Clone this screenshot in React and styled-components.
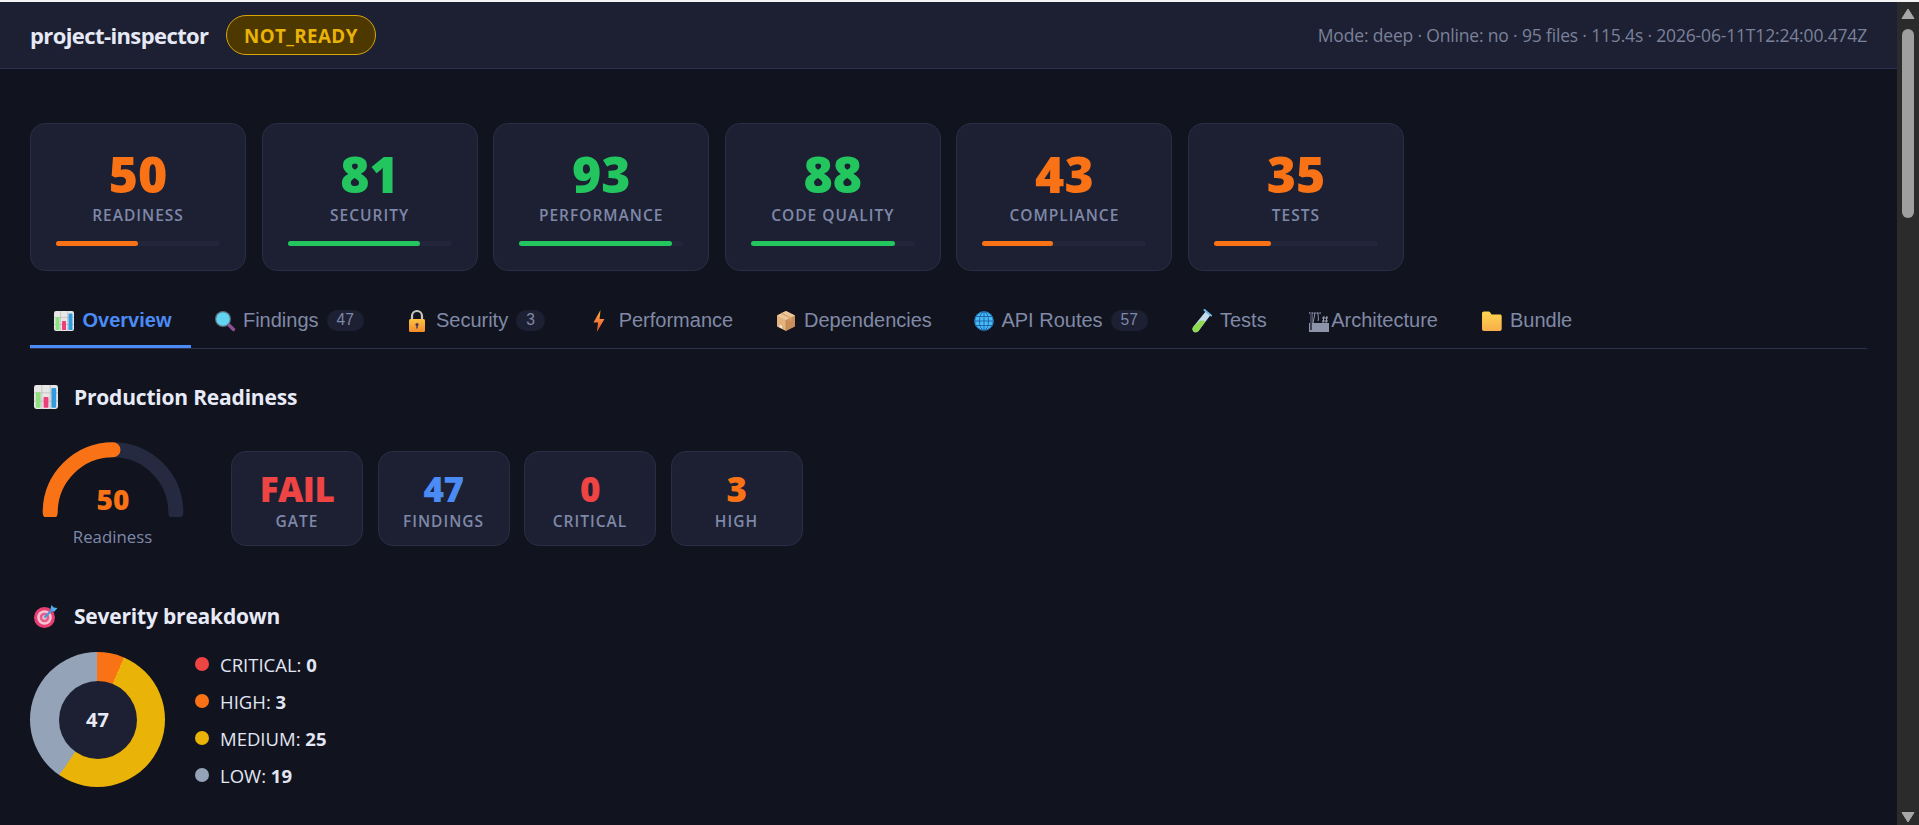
import styled, { createGlobalStyle } from "styled-components";

const ORANGE = "#f97316";
const GREEN = "#22c55e";
const RED = "#ef4444";
const BLUE = "#4b8bf5";
const YELLOW = "#eab308";
const GREY = "#94a3b8";

const GlobalStyle = createGlobalStyle`
    html, body {
        margin: 0;
        height: 825px;
        overflow: hidden;
        background: #11131f;
        font-family: "Open Sans", "Liberation Sans", sans-serif;
    }
`;

const Page = styled.div`
    display: flex;
    height: 823px;
    border-top: 2px solid #f4f4f4;
`;

const Content = styled.div`
    flex: 1;
    min-width: 0;
    background: #11131f;
`;

const Scrollbar = styled.div`
    width: 22px;
    background: #2b2b2b;
    display: flex;
    flex-direction: column;
    align-items: center;
    justify-content: space-between;
    padding: 6px 0 2px;
    box-sizing: border-box;
`;

const ScrollThumb = styled.div`
    width: 12px;
    height: 189px;
    border-radius: 6px;
    background: #9f9f9f;
    margin-top: 9px;
`;

const ScrollSpacer = styled.div`
    flex: 1;
`;

const Header = styled.header`
    height: 66px;
    padding: 0 30px;
    display: flex;
    align-items: center;
    justify-content: space-between;
    background: #1c2032;
    border-bottom: 1px solid #2c3150;
`;

const HeaderLeft = styled.div`
    display: flex;
    align-items: center;
    gap: 17.5px;
`;

const Title = styled.div`
    font-size: 22px;
    font-weight: 700;
    letter-spacing: -0.6px;
    color: #e6e9f5;
`;

const Badge = styled.span`
    display: inline-flex;
    align-items: center;
    height: 40px;
    box-sizing: border-box;
    padding: 0 17px;
    border-radius: 20px;
    border: 1px solid #d9a507;
    background: #4d3800;
    color: ${YELLOW};
    font-size: 18.75px;
    font-weight: 700;
    letter-spacing: 0.4px;
`;

const Meta = styled.div`
    font-size: 17.5px;
    letter-spacing: -0.17px;
    color: #7b819b;
`;

const Main = styled.main`
    padding: 54px 30px 0;
`;

const ScoreRow = styled.div`
    display: flex;
    gap: 15.6px;
`;

const ScoreCard = styled.div`
    width: 216px;
    height: 148px;
    box-sizing: border-box;
    padding: 25px 25px 0;
    background: #1c2032;
    border: 1px solid #2a2e45;
    border-radius: 15px;
    display: flex;
    flex-direction: column;
    align-items: center;
`;

const ScoreValue = styled.div`
    font-size: 50px;
    line-height: 50px;
    font-weight: 800;
    color: ${p => p.$color};
`;

const CardLabel = styled.div`
    font-size: 15.5px;
    line-height: 20px;
    letter-spacing: 1px;
    font-weight: 600;
    text-transform: uppercase;
    color: #7f88a8;
`;

const ScoreLabel = styled(CardLabel)`
    margin-top: 6px;
`;

const Track = styled.div`
    align-self: stretch;
    height: 5px;
    margin-top: 16px;
    border-radius: 3px;
    background: #23263a;
`;

const Fill = styled.div`
    height: 100%;
    border-radius: 3px;
    background: ${p => p.$color};
`;

const Tabs = styled.nav`
    display: flex;
    margin-top: 25px;
    border-bottom: 1px solid #2c3150;
`;

const Tab = styled.div`
    display: flex;
    align-items: center;
    height: 52px;
    box-sizing: border-box;
    padding: 0 20px;
    border-bottom: 3px solid ${p => (p.$active ? BLUE : "transparent")};
    font-family: "Liberation Sans", Arial, sans-serif;
    font-size: 20px;
    font-weight: ${p => (p.$active ? 700 : 400)};
    color: ${p => (p.$active ? BLUE : "#808aa6")};
`;

const TabIcon = styled.span`
    width: ${p => p.$width}px;
    margin-right: ${p => (p.$tight ? "0" : "5px")};
    display: flex;
    justify-content: center;
`;

const TabCount = styled.span`
    margin-left: 8px;
    height: 21px;
    padding: 0 10px;
    box-sizing: border-box;
    border-radius: 11px;
    background: #1c2032;
    font-size: 15.6px;
    line-height: 20px;
    text-align: center;
    font-weight: 400;
    color: #7f88a8;
`;

const SectionHeading = styled.h2`
    margin: ${p => p.$top}px 0 0;
    height: 30px;
    display: flex;
    align-items: center;
    gap: 12px;
    font-size: 21px;
    font-weight: 700;
    letter-spacing: -0.2px;
    color: #e8ebf7;
`;

const HeadingIcon = styled.span`
    width: 32px;
    display: flex;
    justify-content: center;
`;

const ReadinessRow = styled.div`
    display: flex;
    align-items: flex-start;
    gap: 36px;
    margin-top: 25px;
`;

const Gauge = styled.div`
    width: 165px;
    display: flex;
    flex-direction: column;
    align-items: center;
`;

const GaugeLabel = styled.div`
    font-size: 16.8px;
    line-height: 22px;
    margin-top: 9px;
    color: #7f88a8;
`;

const StatRow = styled.div`
    display: flex;
    gap: 14.5px;
    margin-top: 14px;
`;

const StatCard = styled.div`
    width: 132px;
    height: 95px;
    box-sizing: border-box;
    padding-top: 19px;
    background: #1c2032;
    border: 1px solid #2a2e45;
    border-radius: 15px;
    display: flex;
    flex-direction: column;
    align-items: center;
`;

const StatValue = styled.div`
    font-size: 35px;
    line-height: 36px;
    font-weight: 800;
    letter-spacing: -0.6px;
    color: ${p => p.$color};
`;

const StatLabel = styled(CardLabel)`
    margin-top: 4px;
`;

const SeverityRow = styled.div`
    display: flex;
    align-items: center;
    gap: 30px;
    margin-top: 21px;
`;

const Donut = styled.div`
    width: 135px;
    height: 135px;
    border-radius: 50%;
    background: conic-gradient(
        ${ORANGE} 0 23deg,
        ${YELLOW} 23deg 214.5deg,
        ${GREY} 214.5deg 360deg
    );
    display: flex;
    align-items: center;
    justify-content: center;
`;

const DonutHole = styled.div`
    width: 78px;
    height: 78px;
    border-radius: 50%;
    background: #1c2032;
    display: flex;
    align-items: center;
    justify-content: center;
    font-size: 20px;
    font-weight: 700;
    color: #e8ebf7;
`;

const Legend = styled.ul`
    list-style: none;
    margin: 0;
    padding: 0;
    display: flex;
    flex-direction: column;
    gap: 15px;
`;

const LegendItem = styled.li`
    display: flex;
    align-items: center;
    height: 22px;
    gap: 11px;
    font-size: 18.5px;
    color: #e2e6f2;

    strong {
        font-weight: 700;
    }
`;

const Dot = styled.span`
    width: 14px;
    height: 14px;
    border-radius: 50%;
    background: ${p => p.$color};
`;

const ChartEmoji = ({ size = 20 }) => (
    <svg width={size} height={size} viewBox="0 0 20 20">
        <rect width="20" height="20" rx="2" fill="#e9e6e6" />
        <path d="M6.5 0v20M13.5 0v20M0 6.5h20M0 13.5h20" stroke="#b9b6b8" strokeWidth="0.6" />
        <rect x="1.5" y="6" width="4" height="13" rx="0.6" fill="#8fe07f" />
        <rect x="8" y="10" width="4" height="9" rx="0.6" fill="#ec3f7c" />
        <rect x="14.5" y="2.5" width="4" height="16.5" rx="0.6" fill="#2f9be0" />
    </svg>
);

const SearchEmoji = () => (
    <svg width="22" height="22" viewBox="0 0 22 22">
        <path d="M13.5 13.5l6 6" stroke="#8e4f93" strokeWidth="3.4" strokeLinecap="round" />
        <circle cx="9" cy="9" r="8" fill="#5a6f80" />
        <circle cx="9" cy="9" r="6.8" fill="#63d3f2" />
    </svg>
);

const LockEmoji = () => (
    <svg width="20" height="24" viewBox="0 0 20 24">
        <defs>
            <linearGradient id="lockBody" x1="0" y1="0" x2="0" y2="1">
                <stop offset="0" stopColor="#fcc33f" />
                <stop offset="1" stopColor="#f58b2c" />
            </linearGradient>
        </defs>
        <path d="M5 11V7a5 5 0 0 1 10 0v4" fill="none" stroke="#c9c3bd" strokeWidth="2.2" />
        <rect x="2" y="10" width="16" height="13" rx="1.5" fill="url(#lockBody)" />
        <circle cx="10" cy="15.5" r="1.6" fill="#4a3560" />
        <rect x="9.3" y="15.5" width="1.4" height="4" fill="#4a3560" />
    </svg>
);

const BoltEmoji = () => (
    <svg width="14" height="24" viewBox="0 0 14 24">
        <defs>
            <linearGradient id="boltFill" x1="0" y1="0" x2="0" y2="1">
                <stop offset="0" stopColor="#fdb13c" />
                <stop offset="1" stopColor="#ec4c35" />
            </linearGradient>
        </defs>
        <path d="M8.5 1L1.5 13.5h4.6L4.8 23l7.7-13H7.6z" fill="url(#boltFill)" />
    </svg>
);

const PackageEmoji = () => (
    <svg width="20" height="22" viewBox="0 0 20 22">
        <path d="M10 1l9 4.5v11L10 21z" fill="#c98f5b" />
        <path d="M10 1L1 5.500v11L10 21z" fill="#e3b27f" />
        <path d="M1 5.500L10 10l9-4.500L10 1z" fill="#efc899" />
        <path d="M10 10v11" stroke="#b77f4e" strokeWidth="0.6" />
        <path d="M5.500 3.300l9 4.500v3" fill="none" stroke="#d9a877" strokeWidth="1.6" />
        <path d="M3.500 14.500l2.500 1.200v2.800l-2.500-1.200z" fill="#f1e8df" />
    </svg>
);

const GlobeEmoji = () => (
    <svg width="20" height="20" viewBox="0 0 20 20">
        <circle cx="10" cy="10" r="9.700" fill="#45bdf2" />
        <g fill="none" stroke="#1d5fa8" strokeWidth="0.9">
            <circle cx="10" cy="10" r="9.300" />
            <ellipse cx="10" cy="10" rx="4.500" ry="9.300" />
            <path d="M10 .7v18.600M.7 10h18.600M2 5.500h16M2 14.500h16" />
        </g>
    </svg>
);

const TubeEmoji = () => (
    <svg width="21" height="24" viewBox="0 0 21 24">
        <path d="M15 2l4.500 4L7.500 22c-1.500 1.600-3.600 1.700-5 .4-1.400-1.300-1.300-3.300 0-4.800z" fill="#c3dcea" />
        <path d="M9.500 11.500l5 .5-7 10c-1.500 1.600-3.600 1.700-5 .4-1.400-1.300-1.300-3.300 0-4.800z" fill="#8edb4e" />
        <path d="M13.500 1l6.500 5.500" stroke="#6fb8e6" strokeWidth="2" strokeLinecap="round" />
    </svg>
);

const CraneEmoji = () => (
    <svg width="20" height="22" viewBox="0 0 20 22">
        <rect y="13" width="20" height="9" fill="#8d93a8" />
        <path d="M0 3h12" stroke="#6c7188" strokeWidth="2.200" strokeDasharray="1 .6" />
        <path d="M3 3v10M6 3l-2 10M9 3c0 4 1 5 0 8" fill="none" stroke="#9097ad" strokeWidth="1" />
        <path d="M13 8h6M13 11h6M15 6l-1 7M18 6l-1 7" fill="none" stroke="#aab0c4" strokeWidth="0.9" />
        <rect x="1" y="3" width="2" height="17" fill="#3d4052" />
    </svg>
);

const FolderEmoji = () => (
    <svg width="21" height="22" viewBox="0 0 21 22">
        <defs>
            <linearGradient id="folderFill" x1="0" y1="0" x2="0" y2="1">
                <stop offset="0" stopColor="#fed64f" />
                <stop offset="1" stopColor="#f7ae4b" />
            </linearGradient>
        </defs>
        <path d="M1 3.500C1 2.300 1.800 1.500 3 1.500h4.500c.8 0 1.300.3 1.800 1L10.500 4.500H19c1 0 1.700.7 1.700 1.700V19c0 1.300-.9 2-2 2H3c-1.200 0-2-.8-2-2z" fill="url(#folderFill)" />
    </svg>
);

const TargetEmoji = () => (
    <svg width="24" height="24" viewBox="0 0 24 24">
        <circle cx="10.500" cy="13.500" r="10.500" fill="#e83f72" />
        <circle cx="10.500" cy="13.500" r="7.300" fill="#f6c4d4" />
        <circle cx="10.500" cy="13.500" r="4.800" fill="#e85c8a" />
        <circle cx="10.500" cy="13.500" r="2.200" fill="#e7c3d0" />
        <path d="M10.500 13.500L20 4" stroke="#3d9be0" strokeWidth="2" />
        <path d="M16.500 5l1-4 2 2.500L23.500 4 20 8z" fill="#4fb3f0" />
    </svg>
);

const scores = [
    { label: "Readiness", value: 50, color: ORANGE },
    { label: "Security", value: 81, color: GREEN },
    { label: "Performance", value: 93, color: GREEN },
    { label: "Code Quality", value: 88, color: GREEN },
    { label: "Compliance", value: 43, color: ORANGE },
    { label: "Tests", value: 35, color: ORANGE },
];

const tabs = [
    { label: "Overview", icon: <ChartEmoji />, iconWidth: 27.5, active: true },
    { label: "Findings", icon: <SearchEmoji />, iconWidth: 26.5, count: 47 },
    { label: "Security", icon: <LockEmoji />, iconWidth: 27, count: 3 },
    { label: "Performance", icon: <BoltEmoji />, iconWidth: 28.8 },
    { label: "Dependencies", icon: <PackageEmoji />, iconWidth: 25.8 },
    { label: "API Routes", icon: <GlobeEmoji />, iconWidth: 24.6, count: 57 },
    { label: "Tests", icon: <TubeEmoji />, iconWidth: 27 },
    { label: "Architecture", icon: <CraneEmoji />, iconWidth: 24.6, tight: true },
    { label: "Bundle", icon: <FolderEmoji />, iconWidth: 27 },
];

const stats = [
    { label: "Gate", value: "FAIL", color: RED },
    { label: "Findings", value: 47, color: BLUE },
    { label: "Critical", value: 0, color: RED },
    { label: "High", value: 3, color: ORANGE },
];

const severities = [
    { label: "CRITICAL", value: 0, color: RED },
    { label: "HIGH", value: 3, color: ORANGE },
    { label: "MEDIUM", value: 25, color: YELLOW },
    { label: "LOW", value: 19, color: GREY },
];

const App = () => (
    <>
        <GlobalStyle />
        <Page>
            <Content>
                <Header>
                    <HeaderLeft>
                        <Title>project-inspector</Title>
                        <Badge>NOT_READY</Badge>
                    </HeaderLeft>
                    <Meta>Mode: deep · Online: no · 95 files · 115.4s · 2026-06-11T12:24:00.474Z</Meta>
                </Header>
                <Main>
                    <ScoreRow>
                        {scores.map(score => (
                            <ScoreCard key={score.label}>
                                <ScoreValue $color={score.color}>{score.value}</ScoreValue>
                                <ScoreLabel>{score.label}</ScoreLabel>
                                <Track>
                                    <Fill $color={score.color} style={{ width: `${score.value}%` }} />
                                </Track>
                            </ScoreCard>
                        ))}
                    </ScoreRow>
                    <Tabs>
                        {tabs.map(tab => (
                            <Tab key={tab.label} $active={tab.active}>
                                <TabIcon $width={tab.iconWidth} $tight={tab.tight}>{tab.icon}</TabIcon>
                                {tab.label}
                                {tab.count !== undefined && <TabCount>{tab.count}</TabCount>}
                            </Tab>
                        ))}
                    </Tabs>
                    <SectionHeading $top={33}>
                        <HeadingIcon><ChartEmoji size={24} /></HeadingIcon>
                        Production Readiness
                    </SectionHeading>
                    <ReadinessRow>
                        <Gauge>
                            <svg width="150" height="80" viewBox="0 0 150 80">
                                <path d="M12.2 75.500A62.800 62.800 0 0 1 137.800 75.500" fill="none" stroke="#262a40" strokeWidth="15" strokeLinecap="round" />
                                <path d="M12.2 75.500A62.800 62.800 0 0 1 75 12.700" fill="none" stroke={ORANGE} strokeWidth="15" strokeLinecap="round" />
                                <text x="75" y="73" textAnchor="middle" fontSize="28" fontWeight="800" fill={ORANGE}>50</text>
                            </svg>
                            <GaugeLabel>Readiness</GaugeLabel>
                        </Gauge>
                        <StatRow>
                            {stats.map(stat => (
                                <StatCard key={stat.label}>
                                    <StatValue $color={stat.color}>{stat.value}</StatValue>
                                    <StatLabel>{stat.label}</StatLabel>
                                </StatCard>
                            ))}
                        </StatRow>
                    </ReadinessRow>
                    <SectionHeading $top={53}>
                        <HeadingIcon><TargetEmoji /></HeadingIcon>
                        Severity breakdown
                    </SectionHeading>
                    <SeverityRow>
                        <Donut>
                            <DonutHole>47</DonutHole>
                        </Donut>
                        <Legend>
                            {severities.map(severity => (
                                <LegendItem key={severity.label}>
                                    <Dot $color={severity.color} />
                                    <span>{severity.label}: <strong>{severity.value}</strong></span>
                                </LegendItem>
                            ))}
                        </Legend>
                    </SeverityRow>
                </Main>
            </Content>
            <Scrollbar>
                <svg width="14" height="12" viewBox="0 0 14 12"><path d="M7 1L13 10.500H1z" fill="#a8a8a8" stroke="#a8a8a8" strokeLinejoin="round" /></svg>
                <ScrollThumb />
                <ScrollSpacer />
                <svg width="14" height="12" viewBox="0 0 14 12"><path d="M7 11L13 1.500H1z" fill="#a8a8a8" stroke="#a8a8a8" strokeLinejoin="round" /></svg>
            </Scrollbar>
        </Page>
    </>
);

export default App;
